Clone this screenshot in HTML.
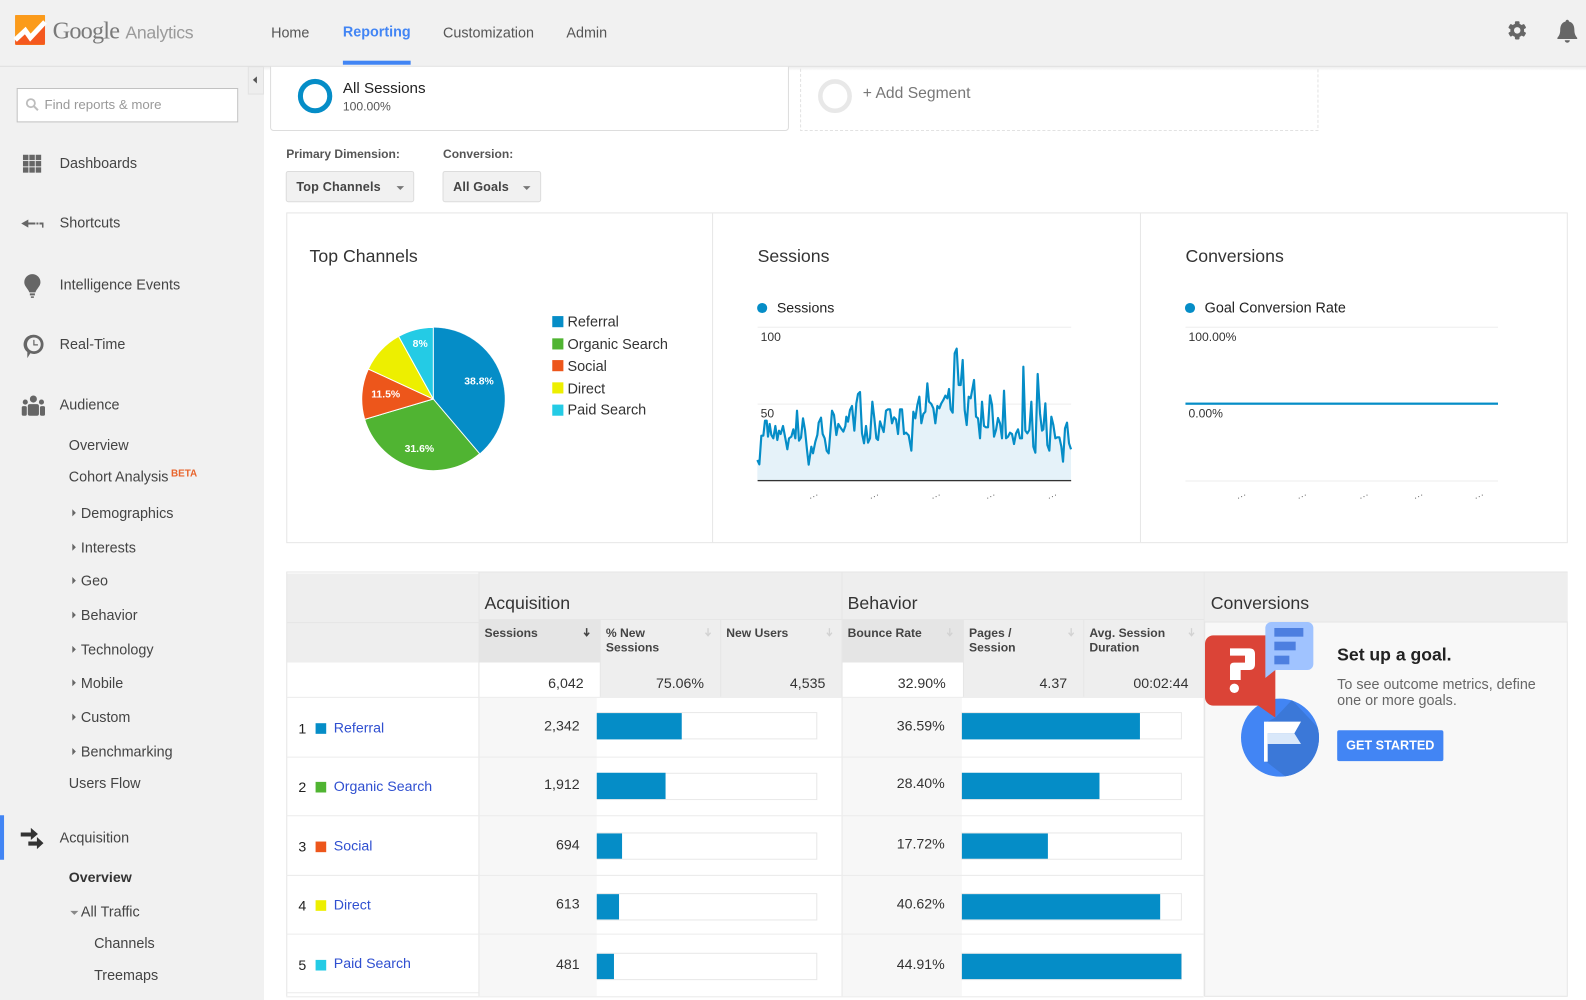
<!DOCTYPE html>
<html><head><meta charset="utf-8"><title>Google Analytics</title>
<style>
html,body{margin:0;padding:0;width:1586px;height:1000px;overflow:hidden;background:#fff}
#w{position:absolute;left:0;top:0;width:1568px;height:989px;transform:scale(1.01148);transform-origin:0 0;font-family:"Liberation Sans",sans-serif;color:#444;font-size:14px;overflow:hidden;background:#fff}
svg.g{position:absolute;left:0;top:0}
.t{position:absolute;white-space:nowrap;line-height:16px;height:16px}
.r{transform:translateX(-100%)}
.s{color:#444;font-size:14.200px;margin-top:.8px}
.h{font-size:17.500px;color:#333}
.b{font-weight:bold;font-size:12px;color:#444;line-height:14px;height:auto}
.l{color:#2f4fd0}
.n{color:#333}
.p{color:#fff;font-weight:bold;font-size:10.300px}
.k{color:#222}
</style></head><body><div id="w">
<svg class="g" width="1568" height="989" viewBox="0 0 1568 989">
<defs><clipPath id="cc"><circle cx="270" cy="443" r="117"/></clipPath><linearGradient id="sh" x1="0" y1="0" x2="0" y2="1"><stop offset="0" stop-color="#000" stop-opacity=".14"/><stop offset="1" stop-color="#000" stop-opacity="0"/></linearGradient></defs>
<!-- header and sidebar -->
<rect x="0" y="0" width="1568" height="65" fill="#f1f1f1"/>
<rect x="0" y="65" width="261" height="924" fill="#f1f1f1"/>
<rect x="261" y="66" width="1307" height="4" fill="url(#sh)" opacity=".5"/>
<rect x="0" y="65" width="1568" height="1" fill="#dddddd"/>
<rect x="339" y="60" width="67" height="4" fill="#4285f4"/>
<rect x="245.500" y="66" width="15" height="27" fill="#eeeeee" stroke="#e2e2e2"/>
<path d="M250 79l4-3.500v7z" fill="#555"/>
<!-- logo -->
<rect x="15" y="15" width="29.500" height="29.500" rx="1" fill="#f57f17"/>
<path d="M15 15h29.500v6L30 36l-5-7-10 9z" fill="#fb9b1a"/>
<path d="M15 38l10-9 5 7 14.500-15v21a2 2 0 0 1-2 2H15z" fill="#f4581f"/>
<path d="M15 39.500l10-9.300 5 7 14.500-15.500" fill="none" stroke="#fff" stroke-width="5"/>
<!-- search -->
<rect x="17" y="87.500" width="218" height="33" fill="#fff" stroke="#c2c2c2"/>
<circle cx="30.500" cy="102" r="4" fill="none" stroke="#bdbdbd" stroke-width="1.800"/><path d="M33.500 105l4 4" stroke="#bdbdbd" stroke-width="2"/>
<!-- sidebar icons -->
<g fill="#666"><rect x="22.700" y="153" width="5.400" height="5.300"/><rect x="29" y="153" width="5.400" height="5.300"/><rect x="35.300" y="153" width="5.400" height="5.300"/><rect x="22.700" y="159.200" width="5.400" height="5.300"/><rect x="29" y="159.200" width="5.400" height="5.300"/><rect x="35.300" y="159.200" width="5.400" height="5.300"/><rect x="22.700" y="165.400" width="5.400" height="5.300"/><rect x="29" y="165.400" width="5.400" height="5.300"/><rect x="35.300" y="165.400" width="5.400" height="5.300"/></g>
<path d="M21 221l7-4v3h7v2h-7v3zM36 220h2v2h-2zM39 220h4v5h-1.500v-3H39z" fill="#666"/>
<path d="M32 271a8 8 0 0 0-8 8c0 4 3.500 6 5 10h6c1.500-4 5-6 5-10a8 8 0 0 0-8-8zM29.500 290h5v2h-5zM30.500 293h3v1.500h-3z" fill="#666"/>
<path d="M33.500 331a9.500 9.500 0 1 1-3.500 18.300L27 354v-6a9.500 9.500 0 0 1 6.500-17z" fill="#666"/><circle cx="33.500" cy="340.500" r="6.800" fill="#f1f1f1"/><path d="M33.500 336v5h4" fill="none" stroke="#666" stroke-width="1.200"/>
<g fill="#666"><circle cx="33" cy="394.500" r="3.500"/><circle cx="25" cy="397.500" r="2.500"/><circle cx="41" cy="397.500" r="2.500"/><rect x="27.500" y="399.500" width="11" height="11.500" rx="2"/><rect x="21.500" y="401.500" width="5" height="9.500" rx="1.500"/><rect x="39.500" y="401.500" width="5" height="9.500" rx="1.500"/></g>
<rect x="0" y="806" width="4" height="44" fill="#4285f4"/>
<path d="M20.500 823h10v-4.500l7 6-7 6V827h-10zM28 832h8.500v-4.500l6.500 6-6.500 6V836H28z" fill="#333"/>
<!-- sidebar triangles -->
<g fill="#666"><path d="M71.500 503.500l3.500 3.500-3.500 3.500zM71.500 537.500l3.500 3.500-3.500 3.500zM71.500 570.500l3.500 3.500-3.500 3.500zM71.500 604.500l3.500 3.500-3.500 3.500zM71.500 638.500l3.500 3.500-3.500 3.500zM71.500 671.500l3.500 3.500-3.500 3.500zM71.500 705.500l3.500 3.500-3.500 3.500zM71.500 739.500l3.500 3.500-3.500 3.500z"/><path d="M69.500 900.500h8l-4 4z" fill="#888"/></g>
<!-- gear and bell -->
<g transform="translate(1500,30)"><g fill="#666"><circle r="6.800"/><rect x="-2.300" y="-9" width="4.600" height="18" rx="1"/><rect x="-2.300" y="-9" width="4.600" height="18" rx="1" transform="rotate(60)"/><rect x="-2.300" y="-9" width="4.600" height="18" rx="1" transform="rotate(120)"/></g><circle r="3.200" fill="#f1f1f1"/></g>
<path d="M1549.500 19.500c1 0 1.500.7 1.700 1.700 3.800 1 5.300 4.200 5.300 8.500 0 3.800 1.300 6 2.800 7.800v1h-19.600v-1c1.500-1.800 2.800-4 2.800-7.800 0-4.300 1.500-7.500 5.300-8.500.2-1 .7-1.700 1.700-1.700zM1547 39.800h5a2.500 2.500 0 0 1-5 0z" fill="#666"/>
<!-- segment cards -->
<path d="M267.500 66v60a3 3 0 0 0 3 3h506a3 3 0 0 0 3-3V66" fill="#fff" stroke="#dddddd"/>
<circle cx="311.500" cy="95" r="14.500" fill="none" stroke="#058dc7" stroke-width="5"/>
<path d="M791.500 68v61h511.500V68" fill="none" stroke="#e2e2e2" stroke-dasharray="3 2"/>
<circle cx="825.500" cy="95" r="14.500" fill="none" stroke="#e8e8e8" stroke-width="4.500"/>
<!-- selects -->
<rect x="283" y="169.500" width="126" height="30" rx="2" fill="#f1f1f1" stroke="#dcdcdc"/><path d="M392 184h7.500l-3.750 3.800z" fill="#777"/>
<rect x="438" y="169.500" width="96.500" height="30" rx="2" fill="#f1f1f1" stroke="#dcdcdc"/><path d="M517 184h7.500l-3.750 3.800z" fill="#777"/>
<!-- panels -->
<rect x="283.500" y="210.500" width="1266" height="326" fill="#fff" stroke="#e6e6e6"/>
<path d="M704.500 211v325M1127.500 211v325" stroke="#e6e6e6"/>
<!-- pie -->
<g stroke="#fff" stroke-width="1" transform="translate(428.400,394.500) scale(.32956)">
<path d="M0 0V-215A215 215 0 0 1 139 164Z" fill="#058dc7"/>
<path d="M0 0L139 164A215 215 0 0 1-206 61Z" fill="#50b432" stroke-width="3"/>
<path d="M0 0L-206 61A215 215 0 0 1-195-90Z" fill="#ed561b" stroke-width="3"/>
<path d="M0 0L-195-90A215 215 0 0 1-104-188Z" fill="#edef00" stroke-width="3"/>
<path d="M0 0L-104-188A215 215 0 0 1 0-215Z" fill="#24cbe5" stroke-width="3"/>
</g>
<rect x="546" y="312.500" width="11" height="11" fill="#058dc7"/><rect x="546" y="334.500" width="11" height="11" fill="#50b432"/><rect x="546" y="356" width="11" height="11" fill="#ed561b"/><rect x="546" y="378" width="11" height="11" fill="#edef00"/><rect x="546" y="400" width="11" height="11" fill="#24cbe5"/>
<!-- sessions chart -->
<circle cx="753.500" cy="304.500" r="5" fill="#058dc7"/>
<path d="M749 323.500h310M749 399.500h310" stroke="#eeeeee"/>
<g transform="translate(701.950,286.700) scale(.32956)">
<path d="M142 571V510L148 523 154 437 160 437 165 392 170 392 174 440 179 402 184 435 190 445 196 408 202 450 207 422 212 432 219 408 226 445 232 478 237 445 244 440 250 418 256 445 261 362 267 452 273 443 279 385 285 420 291 480 296 524 304 470 309 490 316 455 322 435 326 398 333 383 338 432 344 445 350 482 356 490 366 362 372 375 379 435 385 402 391 412 400 425 406 408 409 380 414 395 420 360 426 348 433 422 439 340 444 312 450 306 456 430 462 460 468 408 474 458 480 445 487 335 493 385 499 445 504 450 510 394 516 412 521 426 528 362 534 358 540 358 546 400 552 382 558 388 564 432 570 358 576 358 582 432 588 428 596 436 604 482 610 365 616 385 622 345 628 320 634 400 640 372 646 365 652 280 657 335 664 342 670 355 676 400 682 348 688 355 694 340 700 330 706 317 712 325 717 297 722 358 728 368 734 190 740 176 746 285 752 285 758 210 764 360 770 405 776 320 782 325 792 270 798 380 804 385 810 445 816 335 822 408 828 412 834 412 840 316 846 345 852 440 858 420 864 384 870 400 876 445 882 302 888 445 894 440 900 428 906 432 912 462 918 430 924 418 930 445 936 445 940 230 946 422 952 430 958 420 964 335 970 470 976 488 983 252 990 370 996 422 1000 418 1006 340 1012 465 1018 482 1024 380 1030 405 1036 445 1042 442 1048 442 1054 470 1059 515 1065 415 1071 398 1077 460 1083 478V571Z" fill="#e5f2f9"/>
<path d="M142 510L148 523 154 437 160 437 165 392 170 392 174 440 179 402 184 435 190 445 196 408 202 450 207 422 212 432 219 408 226 445 232 478 237 445 244 440 250 418 256 445 261 362 267 452 273 443 279 385 285 420 291 480 296 524 304 470 309 490 316 455 322 435 326 398 333 383 338 432 344 445 350 482 356 490 366 362 372 375 379 435 385 402 391 412 400 425 406 408 409 380 414 395 420 360 426 348 433 422 439 340 444 312 450 306 456 430 462 460 468 408 474 458 480 445 487 335 493 385 499 445 504 450 510 394 516 412 521 426 528 362 534 358 540 358 546 400 552 382 558 388 564 432 570 358 576 358 582 432 588 428 596 436 604 482 610 365 616 385 622 345 628 320 634 400 640 372 646 365 652 280 657 335 664 342 670 355 676 400 682 348 688 355 694 340 700 330 706 317 712 325 717 297 722 358 728 368 734 190 740 176 746 285 752 285 758 210 764 360 770 405 776 320 782 325 792 270 798 380 804 385 810 445 816 335 822 408 828 412 834 412 840 316 846 345 852 440 858 420 864 384 870 400 876 445 882 302 888 445 894 440 900 428 906 432 912 462 918 430 924 418 930 445 936 445 940 230 946 422 952 430 958 420 964 335 970 470 976 488 983 252 990 370 996 422 1000 418 1006 340 1012 465 1018 482 1024 380 1030 405 1036 445 1042 442 1048 442 1054 470 1059 515 1065 415 1071 398 1077 460 1083 478" fill="none" stroke="#058dc7" stroke-width="6.500" stroke-linejoin="round"/>
</g>
<rect x="749" y="474.500" width="310" height="1.300" fill="#333"/>
<g fill="#666"><path d="M801 492h1v1h-1zM804 490.500h1v1h-1zM807 489h1v1h-1zM861 492h1v1h-1zM864 490.500h1v1h-1zM867 489h1v1h-1zM922 492h1v1h-1zM925 490.500h1v1h-1zM928 489h1v1h-1zM976 492h1v1h-1zM979 490.500h1v1h-1zM982 489h1v1h-1zM1037 492h1v1h-1zM1040 490.500h1v1h-1zM1043 489h1v1h-1z"/></g>
<!-- conversions chart -->
<circle cx="1176.500" cy="304.500" r="5" fill="#058dc7"/>
<path d="M1172 323.500h309M1172 475.500h309" stroke="#eeeeee"/>
<rect x="1172" y="398" width="309" height="2.200" fill="#058dc7"/>
<g fill="#666"><path d="M1224 492h1v1h-1zM1227 490.500h1v1h-1zM1230 489h1v1h-1zM1284 492h1v1h-1zM1287 490.500h1v1h-1zM1290 489h1v1h-1zM1345 492h1v1h-1zM1348 490.500h1v1h-1zM1351 489h1v1h-1zM1399 492h1v1h-1zM1402 490.500h1v1h-1zM1405 489h1v1h-1zM1459 492h1v1h-1zM1462 490.500h1v1h-1zM1465 489h1v1h-1z"/></g>
<!-- table -->
<rect x="283" y="565" width="1267" height="420" fill="#fff"/>
<rect x="283.500" y="567" width="190" height="88" fill="#eeeeee"/>
<rect x="473" y="565" width="718" height="124" fill="#eeeeee"/>
<rect x="1191" y="565" width="359" height="50" fill="#eeeeee"/>
<rect x="473.500" y="612" width="120" height="43" fill="#e5e5e5"/>
<rect x="473.500" y="655" width="120" height="34" fill="#fff"/>
<rect x="832.500" y="612" width="120" height="43" fill="#e5e5e5"/>
<rect x="832.500" y="655" width="120" height="34" fill="#fff"/>
<path d="M283.500 565v420M473.500 565v420M593.500 612v77M712.500 612v77M832.500 565v420M952.500 612v77M1071.500 612v77M1190.500 565v420M283.500 565.500h1266M473 612.500h717M283 615.500h190" stroke="#e6e6e6" fill="none"/>
<rect x="474" y="690" width="116" height="295" fill="#f7f7f7"/>
<rect x="833" y="690" width="118" height="295" fill="#f7f7f7"/>
<path d="M283 689.500h907M283 748.500h907M283 806.500h907M283 865.500h907M283 923.500h907M283 981.500h190M283 985.500h907" stroke="#ececec" fill="none"/>
<!-- bars -->
<g fill="#fff" stroke="#e8e8e8"><rect x="590.500" y="704.500" width="217" height="26"/><rect x="590.500" y="764.500" width="217" height="26"/><rect x="590.500" y="823.500" width="217" height="26"/><rect x="590.500" y="883.500" width="217" height="26"/><rect x="590.500" y="942.500" width="217" height="26"/><rect x="951" y="704.500" width="217" height="26"/><rect x="951" y="764.500" width="217" height="26"/><rect x="951" y="823.500" width="217" height="26"/><rect x="951" y="883.500" width="217" height="26"/><rect x="951" y="942.500" width="217" height="26"/></g>
<g fill="#058dc7"><rect x="590" y="705" width="84" height="26"/><rect x="590" y="764" width="68" height="26"/><rect x="590" y="824" width="25" height="25"/><rect x="590" y="884" width="22" height="25"/><rect x="590" y="943" width="17" height="25"/><rect x="951" y="705" width="176" height="26"/><rect x="951" y="764" width="136" height="26"/><rect x="951" y="824" width="85" height="25"/><rect x="951" y="884" width="196" height="25"/><rect x="951" y="943" width="217" height="25"/></g>
<rect x="312" y="715" width="10.500" height="10.500" fill="#058dc7"/><rect x="312" y="773" width="10.500" height="10.500" fill="#50b432"/><rect x="312" y="832" width="10.500" height="10.500" fill="#ed561b"/><rect x="312" y="890" width="10.500" height="10.500" fill="#edef00"/><rect x="312" y="949" width="10.500" height="10.500" fill="#24cbe5"/>
<!-- sort arrows -->
<path d="M580 621v7M577.500 625.500l2.500 3 2.500-3" fill="none" stroke="#444" stroke-width="1.500"/>
<path d="M700 621v7M697.500 625.500l2.500 3 2.500-3M820 621v7M817.500 625.500l2.500 3 2.500-3M939 621v7M936.500 625.500l2.500 3 2.500-3M1059 621v7M1056.500 625.500l2.500 3 2.500-3M1178 621v7M1175.500 625.500l2.500 3 2.500-3" fill="none" stroke="#d2d2d2" stroke-width="1.300"/>
<!-- conversions panel -->
<rect x="1191" y="615" width="358.500" height="370" fill="#f8f8f8" stroke="#e6e6e6"/>
<g transform="translate(1176.500,583.300) scale(.32956)">
<circle cx="270" cy="443" r="117" fill="#4285f4"/>
<g clip-path="url(#cc)"><path d="M256 383L306 330 400 430V570H300L222 510V400Z" fill="#3b78d8"/></g>
<rect x="222" y="395" width="11" height="120" fill="#fff"/>
<path d="M232 395H333L313 430H232Z" fill="#fff"/><path d="M232 430H313L333 462H232Z" fill="#d9e8fa"/>
<path d="M70 136H256V383L205 347H70A25 25 0 0 1 45 322V161A25 25 0 0 1 70 136Z" fill="#db4437"/>
<path d="M120 175H178Q195 175 195 192V222Q195 240 178 240H152V270H120V230Q120 218 132 218H165V197H120Z" fill="#fff"/>
<circle cx="133" cy="295" r="14" fill="#fff"/>
<path d="M226 240V264L256 240Z" fill="#b93a2e"/>
<path d="M244 96H352A18 18 0 0 1 370 114V222A18 18 0 0 1 352 240H256L226 264V114A18 18 0 0 1 244 96Z" fill="#a0c3ff"/>
<rect x="253" y="114" width="87" height="26" fill="#4d7fe0"/><rect x="253" y="155" width="64" height="26" fill="#4d7fe0"/><rect x="253" y="197" width="45" height="26" fill="#4d7fe0"/>
</g>
<rect x="1322" y="722" width="105" height="30.500" rx="2" fill="#4285f4"/>
</svg>

<!-- top nav -->
<span class="t" style="left:52px;top:16px;font:24px/30px 'Liberation Serif',serif;color:#7a7a7a;height:30px;letter-spacing:-.8px">Google</span>
<span class="t" style="left:124px;top:23px;font-size:17.500px;line-height:18px;color:#9a9a9a;letter-spacing:-.33px">Analytics</span>
<span class="t" style="left:268px;top:25px;font-size:14.200px;color:#555">Home</span>
<span class="t" style="left:339px;top:24px;font-size:14.200px;font-weight:bold;color:#4285f4">Reporting</span>
<span class="t" style="left:438px;top:25px;font-size:14.200px;color:#555">Customization</span>
<span class="t" style="left:560px;top:25px;font-size:14.200px;color:#555">Admin</span>
<!-- search -->
<span class="t" style="left:44px;top:96px;font-size:13.100px;color:#999">Find reports &amp; more</span>
<!-- sidebar -->
<span class="t s" style="left:59px;top:153px">Dashboards</span>
<span class="t s" style="left:59px;top:212px">Shortcuts</span>
<span class="t s" style="left:59px;top:273px">Intelligence Events</span>
<span class="t s" style="left:59px;top:332px">Real-Time</span>
<span class="t s" style="left:59px;top:392px">Audience</span>
<span class="t s" style="left:68px;top:432px">Overview</span>
<span class="t s" style="left:68px;top:463px">Cohort Analysis</span>
<span class="t" style="left:169px;top:461px;font-size:9.800px;font-weight:bold;color:#e8642c">BETA</span>
<span class="t s" style="left:80px;top:499px">Demographics</span>
<span class="t s" style="left:80px;top:533px">Interests</span>
<span class="t s" style="left:80px;top:566px">Geo</span>
<span class="t s" style="left:80px;top:600px">Behavior</span>
<span class="t s" style="left:80px;top:634px">Technology</span>
<span class="t s" style="left:80px;top:667px">Mobile</span>
<span class="t s" style="left:80px;top:701px">Custom</span>
<span class="t s" style="left:80px;top:735px">Benchmarking</span>
<span class="t s" style="left:68px;top:766px">Users Flow</span>
<span class="t s" style="left:59px;top:820px">Acquisition</span>
<span class="t" style="left:68px;top:859px;font-weight:bold;color:#333">Overview</span>
<span class="t s" style="left:80px;top:893px">All Traffic</span>
<span class="t s" style="left:93px;top:924px">Channels</span>
<span class="t s" style="left:93px;top:956px">Treemaps</span>
<!-- segments -->
<span class="t k" style="left:339px;top:79.700px;font-size:15px">All Sessions</span>
<span class="t" style="left:339px;top:96.500px;font-size:12px;color:#555">100.00%</span>
<span class="t" style="left:853px;top:85px;font-size:15.500px;color:#777">+ Add Segment</span>
<!-- selectors -->
<span class="t" style="left:283px;top:144px;font-size:11.900px;font-weight:bold;color:#555">Primary Dimension:</span>
<span class="t" style="left:438px;top:144px;font-size:11.900px;font-weight:bold;color:#555">Conversion:</span>
<span class="t" style="left:293px;top:176.500px;font-size:12.500px;font-weight:bold;color:#444;letter-spacing:.15px">Top Channels</span>
<span class="t" style="left:448px;top:176.500px;font-size:12.500px;font-weight:bold;color:#444;letter-spacing:.1px">All Goals</span>
<!-- panels -->
<span class="t h" style="left:306px;top:245px">Top Channels</span>
<span class="t h" style="left:749px;top:245px">Sessions</span>
<span class="t h" style="left:1172px;top:245px">Conversions</span>
<span class="t p" style="left:459px;top:370px">38.8%</span>
<span class="t p" style="left:400px;top:437px">31.6%</span>
<span class="t p" style="left:367px;top:383px">11.5%</span>
<span class="t p" style="left:408px;top:333px">8%</span>
<span class="t n" style="left:561px;top:310.500px;font-size:14.300px">Referral</span>
<span class="t n" style="left:561px;top:332.500px;font-size:14.300px">Organic Search</span>
<span class="t n" style="left:561px;top:354.500px;font-size:14.300px">Social</span>
<span class="t n" style="left:561px;top:376.500px;font-size:14.300px">Direct</span>
<span class="t n" style="left:561px;top:398px;font-size:14.300px">Paid Search</span>
<span class="t k" style="left:768px;top:296px">Sessions</span>
<span class="t k" style="left:1191px;top:296.500px;font-size:14.200px">Goal Conversion Rate</span>
<span class="t n" style="left:752px;top:325px;font-size:12px">100</span>
<span class="t n" style="left:752px;top:401px;font-size:12px">50</span>
<span class="t n" style="left:1175px;top:325px;font-size:12px">100.00%</span>
<span class="t n" style="left:1175px;top:401px;font-size:12px">0.00%</span>
<!-- table headings -->
<span class="t h" style="left:479px;top:588px">Acquisition</span>
<span class="t h" style="left:838px;top:588px">Behavior</span>
<span class="t h" style="left:1197px;top:588px">Conversions</span>
<span class="t b" style="left:479px;top:619px">Sessions</span>
<span class="t b" style="left:599px;top:619px">% New<br>Sessions</span>
<span class="t b" style="left:718px;top:619px">New Users</span>
<span class="t b" style="left:838px;top:619px">Bounce Rate</span>
<span class="t b" style="left:958px;top:619px">Pages /<br>Session</span>
<span class="t b" style="left:1077px;top:619px">Avg. Session<br>Duration</span>
<!-- totals -->
<span class="t n r" style="left:577px;top:667px">6,042</span>
<span class="t n r" style="left:696px;top:667px">75.06%</span>
<span class="t n r" style="left:816px;top:667px">4,535</span>
<span class="t n r" style="left:935px;top:667px">32.90%</span>
<span class="t n r" style="left:1055px;top:667px">4.37</span>
<span class="t n r" style="left:1175px;top:667px">00:02:44</span>
<!-- rows -->
<span class="t k" style="left:295px;top:712px">1</span><span class="t l" style="left:330px;top:711px">Referral</span>
<span class="t k" style="left:295px;top:770px">2</span><span class="t l" style="left:330px;top:769px">Organic Search</span>
<span class="t k" style="left:295px;top:829px">3</span><span class="t l" style="left:330px;top:828px">Social</span>
<span class="t k" style="left:295px;top:887px">4</span><span class="t l" style="left:330px;top:886px">Direct</span>
<span class="t k" style="left:295px;top:946px">5</span><span class="t l" style="left:330px;top:944px">Paid Search</span>
<span class="t n r" style="left:573px;top:709px">2,342</span><span class="t n r" style="left:934px;top:709px">36.59%</span>
<span class="t n r" style="left:573px;top:767px">1,912</span><span class="t n r" style="left:934px;top:766px">28.40%</span>
<span class="t n r" style="left:573px;top:827px">694</span><span class="t n r" style="left:934px;top:826px">17.72%</span>
<span class="t n r" style="left:573px;top:885px">613</span><span class="t n r" style="left:934px;top:885px">40.62%</span>
<span class="t n r" style="left:573px;top:945px">481</span><span class="t n r" style="left:934px;top:945px">44.91%</span>
<!-- goal -->
<span class="t" style="left:1322px;top:639px;font-size:17.400px;font-weight:bold;color:#222">Set up a goal.</span>
<span class="t" style="left:1322px;top:668.500px;font-size:14.200px;color:#666">To see outcome metrics, define</span>
<span class="t" style="left:1322px;top:684.500px;font-size:14.200px;color:#666">one or more goals.</span>
<span class="t" style="left:1322px;top:729px;width:105px;text-align:center;font-size:12.500px;font-weight:bold;color:#fff">GET STARTED</span>
</div></body></html>
